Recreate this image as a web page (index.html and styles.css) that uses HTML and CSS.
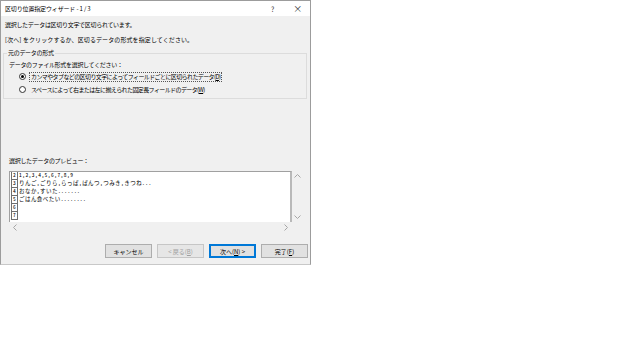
FILE: index.html
```html
<!DOCTYPE html>
<html lang="ja">
<head>
  <meta charset="UTF-8">
  <title>区切り位置指定ウィザード</title>
  <link rel="stylesheet" href="styles.css">
</head>
<body>
  <div class="dialog">
    <div class="titlebar">
      <span class="title">区切り位置指定ウィザード - 1 / 3</span>
      <span class="caption-btn">?</span>
      <span class="caption-btn close">×</span>
    </div>

    <div class="content">
      <p class="msg">選択したデータは区切り文字で区切られています。</p>
      <p class="msg msg2">[次へ] をクリックするか、区切るデータの形式を指定してください。</p>

      <fieldset class="group">
        <legend>元のデータの形式</legend>
        <div class="group-text">データのファイル形式を選択してください：</div>
        <div class="radio-row">
          <span class="radio checked"></span>
          <span class="radio-text focus">カンマやタブなどの区切り文字によってフィールドごとに区切られたデータ(<u>D</u>)</span>
        </div>
        <div class="radio-row">
          <span class="radio"></span>
          <span class="radio-text">スペースによって右または左に揃えられた固定長フィールドのデータ(<u>W</u>)</span>
        </div>
      </fieldset>

      <div class="preview-label">選択したデータのプレビュー：</div>

      <div class="preview">
        <div class="preview-box">
          <div class="row"><span class="num">2</span><span class="cell">1,2,3,4,5,6,7,8,9</span></div>
          <div class="row"><span class="num">3</span><span class="cell">りんご,ごりら,らっぱ,ぱんつ,つみき,きつね...</span></div>
          <div class="row"><span class="num">4</span><span class="cell">おなか,すいた.......</span></div>
          <div class="row"><span class="num">5</span><span class="cell">ごはん食べたい........</span></div>
          <div class="row"><span class="num">6</span><span class="cell"></span></div>
          <div class="row"><span class="num">7</span><span class="cell"></span></div>
        </div>
        <div class="vscroll">
          <svg width="7" height="4" viewBox="0 0 7 4"><path d="M0.5 3.5 L3.5 0.5 L6.5 3.5" fill="none" stroke="#a6a6a6"/></svg>
          <svg width="7" height="4" viewBox="0 0 7 4"><path d="M0.5 0.5 L3.5 3.5 L6.5 0.5" fill="none" stroke="#a6a6a6"/></svg>
        </div>
        <div class="hscroll">
          <svg width="4" height="7" viewBox="0 0 4 7"><path d="M3.5 0.5 L0.5 3.5 L3.5 6.5" fill="none" stroke="#a6a6a6"/></svg>
          <svg width="4" height="7" viewBox="0 0 4 7"><path d="M0.5 0.5 L3.5 3.5 L0.5 6.5" fill="none" stroke="#a6a6a6"/></svg>
        </div>
      </div>

      <div class="buttons">
        <span class="btn">キャンセル</span>
        <span class="btn disabled">&lt; 戻る(<u>B</u>)</span>
        <span class="btn default">次へ(<u>N</u>) &gt;</span>
        <span class="btn">完了(<u>F</u>)</span>
      </div>
    </div>
  </div>
</body>
</html>
```

FILE: styles.css
```css
/* ダイアログ全体 */
body {
  margin: 0;
  background: #fff;
  font-family: "Noto Sans CJK JP", sans-serif;
  font-size: 6px;
  letter-spacing: -0.3px;
  color: #000;
}

.dialog {
  width: 311px;
  height: 265px;
  box-sizing: border-box;
  border: 1px solid #9c9c9c;
  border-bottom-color: #c8c8c8;
  background: #f0f0f0;
  display: flex;
  flex-direction: column;
}

.titlebar {
  height: 15px;
  background: #fff;
  display: flex;
  align-items: center;
  padding-left: 4px;
}

.title {
  flex: 1;
  font-size: 6px;
  letter-spacing: -0.15px;
  white-space: pre;
}

.caption-btn {
  width: 25px;
  text-align: center;
  font-size: 7px;
  color: #333;
}

.caption-btn.close {
  font-size: 9px;
}

.content {
  padding-top: 4px;
}

.msg {
  margin: 0;
  padding-left: 4px;
  line-height: 10px;
}

.msg2 {
  margin-top: 5px;
  letter-spacing: 0.1px;
}

/* 元のデータの形式 */
.group {
  margin: 3px 0 0 2px;
  width: 304px;
  box-sizing: border-box;
  border: 1px solid #dcdcdc;
  padding: 2px 0 2px 5px;
}

.group legend {
  padding: 0 1px;
  margin-left: -2px;
  line-height: 10px;
}

.group-text {
  line-height: 10px;
}

.radio-row {
  height: 13px;
  display: flex;
  align-items: center;
  padding-left: 10px;
}

.radio {
  width: 5px;
  height: 5px;
  border: 1px solid #333;
  border-radius: 50%;
  background: #fff;
  display: flex;
  align-items: center;
  justify-content: center;
  margin-right: 4px;
}

.radio.checked::after {
  content: "";
  width: 3px;
  height: 3px;
  border-radius: 50%;
  background: #000;
}

.radio-text {
  line-height: 8px;
  padding: 0 1px;
  letter-spacing: -0.6px;
}

.radio-text.focus {
  outline: 1px dotted #555;
}

/* プレビュー */
.preview-label {
  margin-top: 57px;
  padding-left: 8px;
  line-height: 10px;
}

.preview {
  margin: 5px 0 0 8px;
  display: grid;
  grid-template-columns: 283px 10px;
  grid-template-rows: 51px 10px;
}

.preview-box {
  background: #fff;
  border-top: 1px solid #a0a0a0;
  border-left: 1px solid #a0a0a0;
  border-right: 2px solid #b9b9b9;
  overflow: hidden;
}

.row {
  height: 8px;
  display: flex;
  font-family: "Noto Sans Mono CJK JP", "Noto Sans CJK JP", monospace;
  font-size: 5.5px;
  letter-spacing: 0.45px;
  line-height: 7px;
}

.num {
  width: 5px;
  height: 7px;
  border: 1px solid #6f6f6f;
  border-top: none;
  text-align: center;
  margin-left: 1px;
  letter-spacing: 0;
}

.cell {
  padding-left: 1px;
}

.vscroll {
  display: flex;
  flex-direction: column;
  justify-content: space-between;
  align-items: center;
  padding: 3px 0 3px;
}

.hscroll {
  display: flex;
  justify-content: space-between;
  align-items: center;
  padding: 0 4px;
}

/* ボタン */
.buttons {
  margin-top: 12px;
  display: flex;
  justify-content: flex-end;
  gap: 5px;
  padding-right: 2px;
}

.btn {
  width: 47px;
  height: 14px;
  box-sizing: border-box;
  background: #e1e1e1;
  border: 1px solid #adadad;
  display: flex;
  align-items: center;
  justify-content: center;
  letter-spacing: 0;
  white-space: pre;
}

.btn.disabled {
  color: #a0a0a0;
  background: #e6e6e6;
  border-color: #c6c6c6;
}

.btn.default {
  border-color: #0078d7;
  box-shadow: inset 0 0 0 1px #0078d7;
}
```
